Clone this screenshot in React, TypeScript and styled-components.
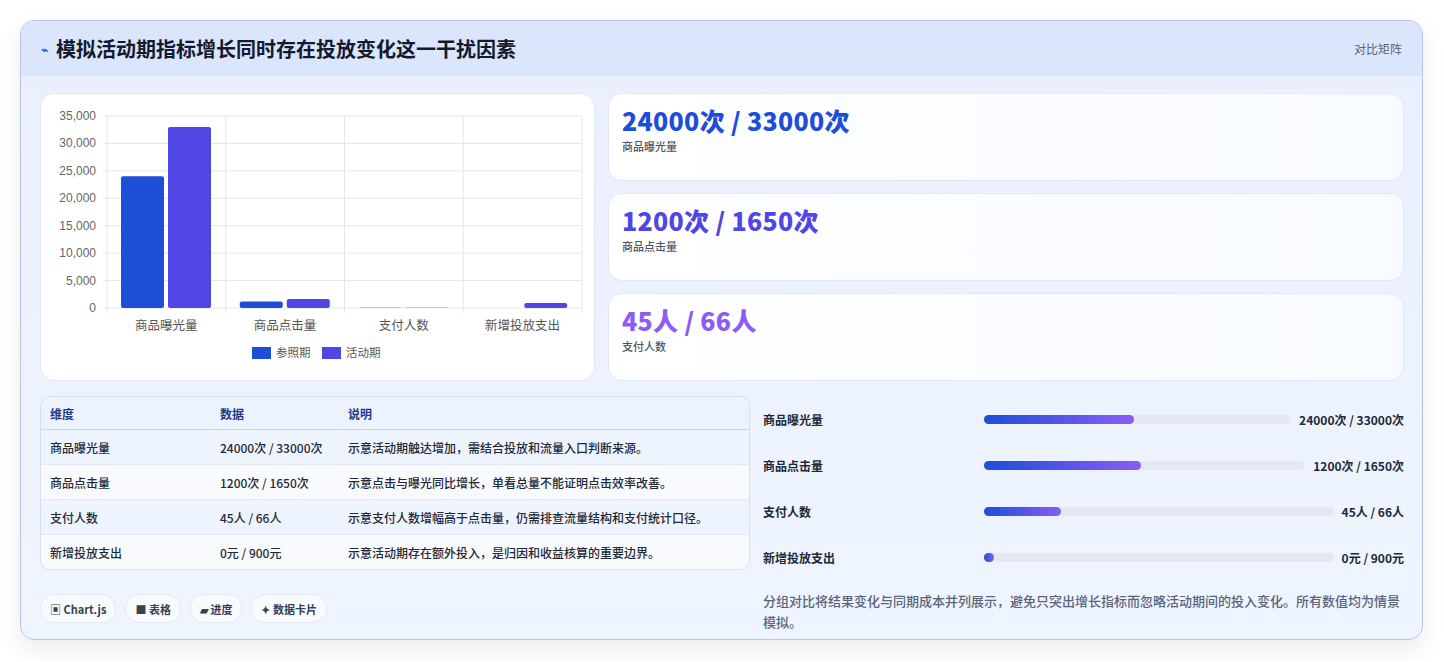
import React from "react";
import styled, { createGlobalStyle } from "styled-components";

const G = createGlobalStyle`
  body { margin:0; background:#fff; font-family: "Noto Sans CJK SC", "Noto Sans", sans-serif; }
`;
const Page = styled.div`padding:20px 21px 21px 20px;`;
const Card = styled.div`
  border:1px solid #b9c3ef; border-radius:14px; overflow:hidden;
  background:linear-gradient(180deg,#e9effd,#eef5ff);
  box-shadow:0 10px 24px rgba(0,0,0,0.08); height:620px; box-sizing:border-box;
  display:flex; flex-direction:column;
`;
const Header = styled.div`
  height:55px; background:#dbe6fd; display:flex; align-items:center; justify-content:space-between;
  padding:0 20px;
`;
const Title = styled.div`display:flex; align-items:center; gap:8px; font-size:20px; font-weight:700; color:#141a2e;`;
const Tag = styled.div`font-size:12px; color:#5a6478;`;
const Body = styled.div`padding:17px 18px 0 19px; display:flex; flex-direction:column; gap:15px;`;
const Grid = styled.div<{ left: number }>`display:grid; grid-template-columns:${p => p.left}px 1fr; column-gap:13px;`;
const Panel = styled.div`background:#fff; border:1px solid #e1e8f7; border-radius:14px; height:288px; box-sizing:border-box;`;
const Stats = styled.div`display:flex; flex-direction:column; gap:12px;`;
const Stat = styled.div`
  height:88px; box-sizing:border-box; border:1px solid #e1e8f7; border-radius:14px;
  background:linear-gradient(90deg,#fff,#f7faff); padding:10px 13px;
`;
const StatNum = styled.div<{ c: string }>`font-size:25px; font-weight:900; color:${p => p.c}; line-height:32px; letter-spacing:0.3px;`;
const StatLbl = styled.div`font-size:11px; color:#4b5563; font-weight:500; margin-top:2px;`;
const Left = styled.div`display:flex; flex-direction:column; gap:24px;`;
const Table = styled.table`
  width:100%; border-collapse:separate; border-spacing:0; border:1px solid #d6def0; border-radius:10px; overflow:hidden;
  font-size:12px; color:#1f2937; font-weight:500;
  th { text-align:left; color:#1e3a8a; font-weight:600; background:#edf3fe; height:32px; border-bottom:1px solid #ccd7ee; }
  td { height:34px; border-bottom:1px solid #e3e9f5; white-space:nowrap; }
  tr:last-child td { border-bottom:none; }
  tbody tr:nth-child(odd) td { background:#eef4fe; }
  tbody tr:nth-child(even) td { background:#f8fafd; }
  th, td { padding:0 9px; }
`;
const Chips = styled.div`display:flex; gap:9px;`;
const Chip = styled.div`
  height:27px; padding:0 9px; border-radius:14px; background:#f8fafe; border:1px solid #e3e9f6;
  font-size:11px; font-weight:700; color:#374151; display:flex; align-items:center; gap:3px;
`;
const Right = styled.div`display:flex; flex-direction:column; padding-top:-4px;`;
const Row = styled.div`display:flex; align-items:center; height:46px; font-size:12px; font-weight:600; color:#1f2937;`;
const RLabel = styled.div`width:221px; flex:none;`;
const Track = styled.div`flex:1; height:9px; background:#e3e8f1; border-radius:5px; margin-right:8px;`;
const Fill = styled.div`height:100%; border-radius:5px; background:linear-gradient(90deg,#1d4ed8,#8b5cf6); min-width:10px;`;
const Val = styled.div`font-weight:700; white-space:nowrap;`;
const Note = styled.div`margin-top:10px; font-size:13px; color:#5b6478; line-height:21px; font-weight:500;`;

const bars = [["商品曝光量", 24000, 33000], ["商品点击量", 1200, 1650], ["支付人数", 45, 66], ["新增投放支出", 0, 900]] as const;

function Chart() {
  const x0 = 66, x1 = 541, y0 = 22, y1 = 214, max = 35000;
  const y = (v: number) => y1 - (v / max) * (y1 - y0);
  const w = (x1 - x0) / 4;
  return (
    <svg width="553" height="286" style={{ display: "block" }} fontFamily="Liberation Sans, sans-serif">
      {[0, 5000, 10000, 15000, 20000, 25000, 30000, 35000].map(v => (
        <g key={v}>
          <line x1={x0 - 4} x2={x1} y1={y(v)} y2={y(v)} stroke="#e3e6ec" />
          <text x={55} y={y(v) + 4} fontSize="12" fill="#666" textAnchor="end">{v.toLocaleString("en-US")}</text>
        </g>
      ))}
      {[0, 1, 2, 3, 4].map(i => <line key={i} x1={x0 + i * w} x2={x0 + i * w} y1={y0} y2={y1 + 5} stroke="#e3e6ec" />)}
      {bars.map(([n, a, b], i) => (
        <g key={n}>
          <rect x={x0 + i * w + 14} y={y(a)} width={43} height={y1 - y(a)} fill="#1d4ed8" rx="2" />
          <rect x={x0 + i * w + 61} y={y(b)} width={43} height={y1 - y(b)} fill="#4f46e5" rx="2" />
          <text x={x0 + i * w + w / 2} y={236} fontSize="12.5" fill="#555" textAnchor="middle" fontFamily="Noto Sans CJK SC">{n}</text>
        </g>
      ))}
      <rect x="211" y="253" width="19" height="12" fill="#1d4ed8" />
      <text x="235" y="263" fontSize="11.5" fill="#555" fontFamily="Noto Sans CJK SC">参照期</text>
      <rect x="281" y="253" width="19" height="12" fill="#4f46e5" />
      <text x="305" y="263" fontSize="11.5" fill="#555" fontFamily="Noto Sans CJK SC">活动期</text>
    </svg>
  );
}

const rows = [
  ["商品曝光量", "24000次 / 33000次", "示意活动期触达增加，需结合投放和流量入口判断来源。"],
  ["商品点击量", "1200次 / 1650次", "示意点击与曝光同比增长，单看总量不能证明点击效率改善。"],
  ["支付人数", "45人 / 66人", "示意支付人数增幅高于点击量，仍需排查流量结构和支付统计口径。"],
  ["新增投放支出", "0元 / 900元", "示意活动期存在额外投入，是归因和收益核算的重要边界。"],
];
const prog = [["商品曝光量", 49, "24000次 / 33000次"], ["商品点击量", 49, "1200次 / 1650次"], ["支付人数", 22, "45人 / 66人"], ["新增投放支出", 0, "0元 / 900元"]] as const;

export default function App() {
  return (
    <Page>
      <G />
      <Card>
        <Header>
          <Title><span style={{ fontSize: 12, color: "#2563eb" }}>⌁</span>模拟活动期指标增长同时存在投放变化这一干扰因素</Title>
          <Tag>对比矩阵</Tag>
        </Header>
        <Body>
          <Grid left={555}>
            <Panel><Chart /></Panel>
            <Stats>
              <Stat><StatNum c="#1d4ed8">24000次 / 33000次</StatNum><StatLbl>商品曝光量</StatLbl></Stat>
              <Stat><StatNum c="#4f46e5">1200次 / 1650次</StatNum><StatLbl>商品点击量</StatLbl></Stat>
              <Stat><StatNum c="#8b5cf6">45人 / 66人</StatNum><StatLbl>支付人数</StatLbl></Stat>
            </Stats>
          </Grid>
          <Grid left={710}>
            <Left>
              <Table>
                <thead><tr><th style={{ width: 152 }}>维度</th><th style={{ width: 110 }}>数据</th><th>说明</th></tr></thead>
                <tbody>{rows.map(r => <tr key={r[0]}>{r.map(c => <td key={c}>{c}</td>)}</tr>)}</tbody>
              </Table>
              <Chips>
                <Chip>▣ Chart.js</Chip><Chip>■ 表格</Chip><Chip>▰ 进度</Chip><Chip>✦ 数据卡片</Chip>
              </Chips>
            </Left>
            <Right>
              {prog.map(([l, p, v]) => (
                <Row key={l}><RLabel>{l}</RLabel><Track><Fill style={{ width: `${p}%` }} /></Track><Val>{v}</Val></Row>
              ))}
              <Note>分组对比将结果变化与同期成本并列展示，避免只突出增长指标而忽略活动期间的投入变化。所有数值均为情景模拟。</Note>
            </Right>
          </Grid>
        </Body>
      </Card>
    </Page>
  );
}
